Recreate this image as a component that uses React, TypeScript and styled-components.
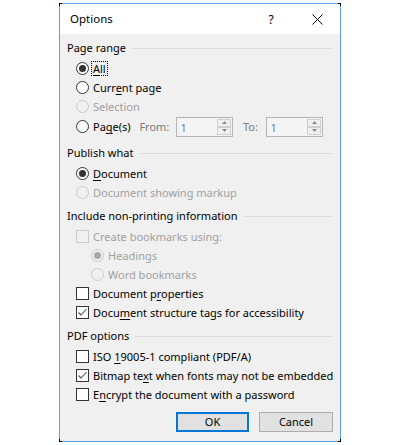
import React from "react";
import styled, { createGlobalStyle } from "styled-components";

const Global = createGlobalStyle`
  html, body { margin: 0; padding: 0; background: #ffffff; }
  body { font-family: "Noto Sans", "Open Sans", sans-serif; font-size: 11px; color: #000; }
  * { box-sizing: border-box; }
`;

const Window = styled.div`
  position: relative;
  margin: 3px 0 0 59px;
  width: 282px;
  height: 439px;
  border: 1px solid #5aa0e4;
  display: flex;
  flex-direction: column;
  background: #f0f0f0;
`;

const Corner = styled.span<{ $v: "top" | "bottom"; $h: "left" | "right" }>`
  position: absolute;
  width: 3px;
  height: 3px;
  ${(p) => p.$v}: -1px;
  ${(p) => p.$h}: -1px;
  border-${(p) => p.$v}: 1px solid #000;
  border-${(p) => p.$h}: 1px solid #000;
`;

const TitleBar = styled.div`
  height: 30px;
  background: #ffffff;
  display: flex;
  align-items: center;
  padding-left: 10px;
  flex-shrink: 0;
`;

const Title = styled.div`
  flex: 1;
  font-size: 11.5px;
  padding-bottom: 1px;
`;

const TitleButton = styled.div<{ $w: number }>`
  width: ${(p) => p.$w}px;
  height: 30px;
  display: flex;
  align-items: center;
  justify-content: center;
  font-size: 12px;
`;

const Body = styled.div`
  flex: 1;
  padding: 3px 7px 0 7px;
  display: flex;
  flex-direction: column;
`;

const Group = styled.div<{ $mb: number }>`
  display: flex;
  flex-direction: column;
  margin-bottom: ${(p) => p.$mb}px;
`;

const Header = styled.div`
  height: 21px;
  margin-bottom: 1px;
  display: flex;
  align-items: center;
  gap: 6px;
  &::after {
    content: "";
    flex: 1;
    height: 1px;
    background: #dcdcdc;
    margin-top: 1px;
  }
`;

const Row = styled.div<{ $indent: number; $h?: number }>`
  height: ${(p) => p.$h ?? 19}px;
  display: flex;
  align-items: center;
  padding-left: ${(p) => p.$indent}px;
`;

const Label = styled.span<{ $disabled?: boolean; $focus?: boolean }>`
  margin-left: 3px;
  padding: 0 1px;
  color: ${(p) => (p.$disabled ? "#a0a0a0" : "#000")};
  outline: ${(p) => (p.$focus ? "1px dotted #000" : "none")};
  line-height: 13px;
  white-space: nowrap;
`;

const Key = styled.span`
  text-decoration: underline;
  text-underline-offset: 2px;
`;

const RadioCircle = styled.span<{ $disabled?: boolean; $checked?: boolean }>`
  width: 13px;
  height: 13px;
  border-radius: 50%;
  border: 1px solid ${(p) => (p.$disabled ? "#cccccc" : "#333333")};
  background: ${(p) => (p.$disabled ? "#f0f0f0" : "#ffffff")};
  display: flex;
  align-items: center;
  justify-content: center;
  flex-shrink: 0;
  &::after {
    content: "";
    display: ${(p) => (p.$checked ? "block" : "none")};
    width: 7px;
    height: 7px;
    border-radius: 50%;
    background: ${(p) => (p.$disabled ? "#a8a8a8" : "#333333")};
  }
`;

const CheckBox = styled.span<{ $disabled?: boolean }>`
  width: 13px;
  height: 13px;
  border: 1px solid ${(p) => (p.$disabled ? "#cccccc" : "#333333")};
  background: ${(p) => (p.$disabled ? "#f0f0f0" : "#ffffff")};
  display: flex;
  align-items: center;
  justify-content: center;
  flex-shrink: 0;
`;

const RadioPart = styled.div`
  width: 65px;
  display: flex;
  align-items: center;
`;

const FieldLabel = styled.span<{ $w: number }>`
  width: ${(p) => p.$w}px;
  color: #7a7a7a;
`;

const SpinBox = styled.div`
  width: 58px;
  height: 20px;
  border: 1px solid #b5b5b5;
  background: #f4f4f4;
  display: flex;
  margin-right: 10px;
`;

const SpinValue = styled.div`
  flex: 1;
  color: #7a7a7a;
  padding: 3px 0 0 3px;
  line-height: 14px;
`;

const SpinButtons = styled.div`
  width: 16px;
  display: flex;
  flex-direction: column;
  padding: 1px;
`;

const SpinHalf = styled.div`
  flex: 1;
  border: 1px solid #d0d0d0;
  background: #f0f0f0;
  display: flex;
  align-items: center;
  justify-content: center;
`;

const Buttons = styled.div`
  display: flex;
  justify-content: flex-end;
  gap: 10px;
  margin-top: 8px;
`;

const Button = styled.div<{ $default?: boolean }>`
  width: ${(p) => (p.$default ? 73 : 74)}px;
  height: 20px;
  background: #e1e1e1;
  border: ${(p) => (p.$default ? "2px solid #0078d7" : "1px solid #adadad")};
  display: flex;
  align-items: center;
  justify-content: center;
  padding-bottom: 1px;
`;

const Check = () => (
  <svg width="11" height="11" viewBox="0 0 11 11">
    <polyline points="1.5,5.5 4,8 9.5,2" fill="none" stroke="#505050" strokeWidth="1.1" />
  </svg>
);

const Arrow = ({ up }: { up: boolean }) => (
  <svg width="5" height="3" viewBox="0 0 5 3">
    <polygon points={up ? "0,3 5,3 2.5,0" : "0,0 5,0 2.5,3"} fill="#8a8a8a" />
  </svg>
);

const Radio = ({
  indent = 9,
  checked,
  disabled,
  focus,
  children,
}: {
  indent?: number;
  checked?: boolean;
  disabled?: boolean;
  focus?: boolean;
  children: React.ReactNode;
}) => (
  <Row $indent={indent}>
    <RadioCircle $checked={checked} $disabled={disabled} />
    <Label $disabled={disabled} $focus={focus}>
      {children}
    </Label>
  </Row>
);

const Checkbox = ({
  checked,
  disabled,
  children,
}: {
  checked?: boolean;
  disabled?: boolean;
  children: React.ReactNode;
}) => (
  <Row $indent={9}>
    <CheckBox $disabled={disabled}>{checked && <Check />}</CheckBox>
    <Label $disabled={disabled}>{children}</Label>
  </Row>
);

const Spin = () => (
  <SpinBox>
    <SpinValue>1</SpinValue>
    <SpinButtons>
      <SpinHalf>
        <Arrow up />
      </SpinHalf>
      <SpinHalf>
        <Arrow up={false} />
      </SpinHalf>
    </SpinButtons>
  </SpinBox>
);

export default function App() {
  return (
    <>
      <Global />
      <Window>
        <Corner $v="top" $h="left" />
        <Corner $v="top" $h="right" />
        <Corner $v="bottom" $h="left" />
        <Corner $v="bottom" $h="right" />
        <TitleBar>
          <Title>Options</Title>
          <TitleButton $w={46}>?</TitleButton>
          <TitleButton $w={46}>
            <svg width="11" height="11" viewBox="0 0 11 11">
              <path d="M0.5 0.5 L10.5 10.5 M10.5 0.5 L0.5 10.5" stroke="#000" strokeWidth="1" />
            </svg>
          </TitleButton>
        </TitleBar>
        <Body>
          <Group $mb={5}>
            <Header>Page range</Header>
            <Radio checked focus>
              <Key>A</Key>ll
            </Radio>
            <Radio>
              Curr<Key>e</Key>nt page
            </Radio>
            <Radio disabled>Selection</Radio>
            <Row $indent={9} $h={21}>
              <RadioPart>
                <RadioCircle />
                <Label>
                  Pa<Key>g</Key>e(s)
                </Label>
              </RadioPart>
              <FieldLabel $w={38}>From:</FieldLabel>
              <Spin />
              <FieldLabel $w={24}>To:</FieldLabel>
              <Spin />
            </Row>
          </Group>
          <Group $mb={3}>
            <Header>Publish what</Header>
            <Radio checked>
              <Key>D</Key>ocument
            </Radio>
            <Radio disabled>Document showing markup</Radio>
          </Group>
          <Group $mb={3}>
            <Header>Include non-printing information</Header>
            <Checkbox disabled>Create bookmarks using:</Checkbox>
            <Radio indent={24} checked disabled>
              Headings
            </Radio>
            <Radio indent={24} disabled>
              Word bookmarks
            </Radio>
            <Checkbox>
              Document p<Key>r</Key>operties
            </Checkbox>
            <Checkbox checked>
              Docu<Key>m</Key>ent structure tags for accessibility
            </Checkbox>
          </Group>
          <Group $mb={0}>
            <Header>PDF options</Header>
            <Checkbox>
              ISO <Key>1</Key>9005-1 compliant (PDF/A)
            </Checkbox>
            <Checkbox checked>
              Bitmap te<Key>x</Key>t when fonts may not be embedded
            </Checkbox>
            <Checkbox>
              E<Key>n</Key>crypt the document with a password
            </Checkbox>
          </Group>
          <Buttons>
            <Button $default>OK</Button>
            <Button>Cancel</Button>
          </Buttons>
        </Body>
      </Window>
    </>
  );
}
